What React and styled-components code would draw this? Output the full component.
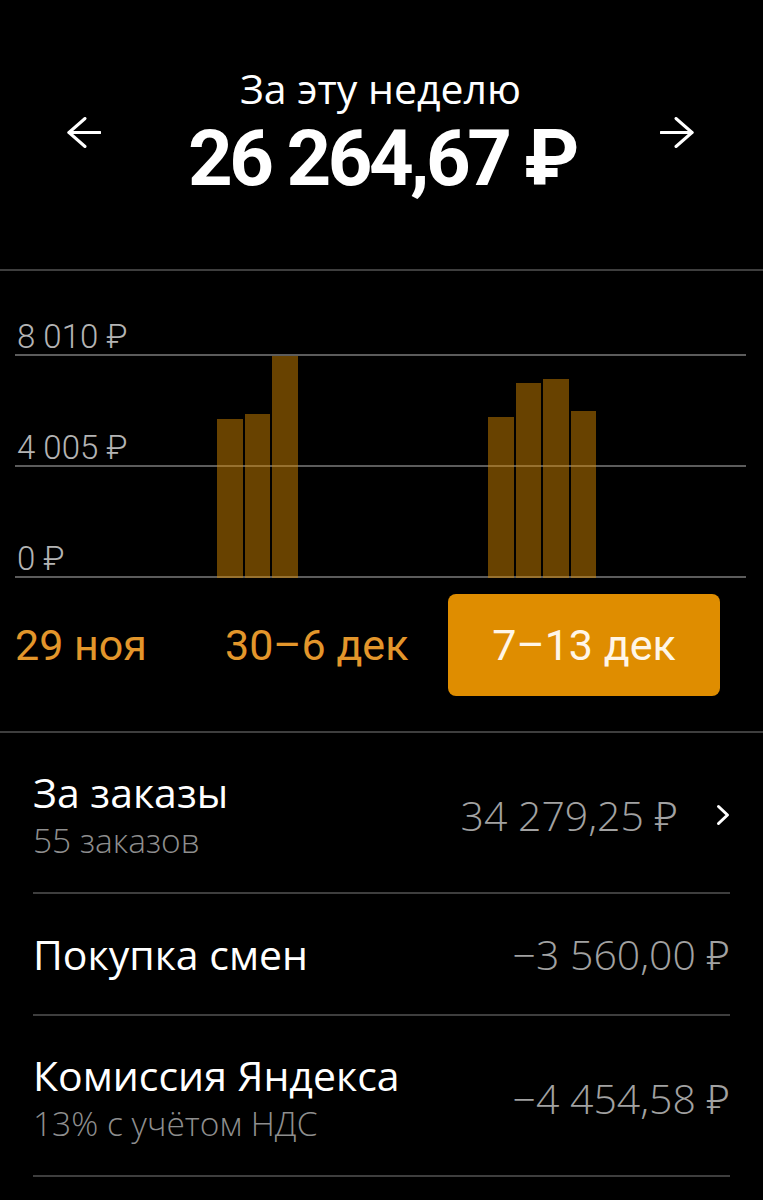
import React from "react";
import styled, { createGlobalStyle } from "styled-components";

const GlobalStyle = createGlobalStyle`
  html, body {
    margin: 0;
    padding: 0;
    background: #000;
  }
  * { box-sizing: border-box; }
`;

const Page = styled.div`
  width: 763px;
  min-height: 1200px;
  background: #000;
  color: #fff;
  font-family: "Open Sans", "Noto Sans", sans-serif;
  overflow: hidden;
`;

const Header = styled.header`
  display: flex;
  justify-content: space-between;
  align-items: flex-start;
  padding: 66px 69px 71px 67px;
  border-bottom: 2px solid #3e3e3e;
`;

const ArrowButton = styled.button`
  all: unset;
  display: flex;
  width: 34px;
  height: 32px;
  margin-top: 51px;
  color: #fff;
  cursor: pointer;
`;

const Summary = styled.div`
  display: flex;
  flex-direction: column;
  align-items: center;
`;

const Period = styled.div`
  font-size: 41px;
  line-height: 44px;
  font-weight: 400;
  color: #fff;
`;

const Total = styled.div`
  margin-top: 10px;
  padding-left: 3px;
  font-family: Roboto, "Noto Sans", sans-serif;
  font-size: 78px;
  line-height: 78px;
  font-weight: 700;
  letter-spacing: -3.5px;
  color: #fff;
`;

const ChartSection = styled.section`
  padding: 50px 17px 0 15px;
`;

const Chart = styled.div`
  display: grid;
  & > * {
    grid-area: 1 / 1;
  }
`;

const Grid = styled.div`
  display: flex;
  flex-direction: column;
`;

const GridRow = styled.div`
  display: flex;
  align-items: flex-end;
  height: ${(p) => p.$h}px;
  border-bottom: 2px solid #5c5c5c;
`;

const AxisLabel = styled.span`
  font-family: Roboto, "Noto Sans", sans-serif;
  font-size: 33px;
  line-height: 32px;
  font-weight: 300;
  padding-left: 2px;
  padding-bottom: 1px;
  color: #b4b4b4;
`;

const BarsLayer = styled.div`
  align-self: end;
  height: 222px;
  display: flex;
  align-items: flex-end;
  gap: 81px;
  padding-left: 202px;
`;

const Week = styled.div`
  display: flex;
  align-items: flex-end;
  gap: 2px;
  width: 190px;
  height: 100%;
`;

const Bar = styled.div`
  width: 25.5px;
  flex: none;
  background: rgba(222, 140, 0, 0.47);
`;

const PeriodRow = styled.div`
  display: grid;
  grid-template-columns: 210px 223px 272px;
  align-items: center;
  padding: 16px 0 35px 15px;
  border-bottom: 2px solid #3e3e3e;
`;

const PeriodLabel = styled.span`
  font-family: Roboto, "Noto Sans", sans-serif;
  font-size: 43px;
  line-height: 50px;
  color: #e3962b;
`;

const PeriodButton = styled.button`
  all: unset;
  display: flex;
  align-items: center;
  justify-content: center;
  height: 102px;
  border-radius: 8px;
  background: #df8d00;
  font-family: Roboto, "Noto Sans", sans-serif;
  font-size: 43px;
  line-height: 50px;
  color: #fff6e8;
  cursor: pointer;
`;

const List = styled.div`
  display: flex;
  flex-direction: column;
`;

const Row = styled.div`
  display: flex;
  align-items: center;
  justify-content: space-between;
  margin: 0 33px;
  padding: ${(p) => (p.$single ? "36px 0 36px" : "37px 0 32px")};
  border-bottom: 2px solid #3e3e3e;
`;

const RowText = styled.div`
  display: flex;
  flex-direction: column;
`;

const RowTitle = styled.div`
  font-size: 41px;
  line-height: 44px;
  color: #fff;
`;

const RowSub = styled.div`
  margin-top: 6px;
  font-size: 33.5px;
  line-height: 40px;
  font-weight: 300;
  color: #8e8e8e;
`;

const RowValue = styled.div`
  display: flex;
  align-items: center;
  gap: 38px;
  font-size: 41px;
  line-height: 48px;
  font-weight: 300;
  color: #a2a2a2;
`;

const Chevron = styled.svg`
  width: 14px;
  height: 22px;
  flex: none;
`;

const ArrowIcon = ({ dir }) => (
  <svg width="34" height="32" viewBox="0 0 34 32" fill="none" stroke="currentColor" strokeWidth="3" strokeLinecap="round" strokeLinejoin="round">
    {dir === "left" ? (
      <>
        <path d="M2 15.5H33" />
        <path d="M18 1.5L2 15.5L18 29.5" />
      </>
    ) : (
      <>
        <path d="M1 15.5H32" />
        <path d="M16 1.5L32 15.5L16 29.5" />
      </>
    )}
  </svg>
);

const MAX = 8010;
const weeks = [
  [5737, 5918, 8010],
  [5810, 7036, 7180, 6020],
];

const rows = [
  { title: "За заказы", sub: "55 заказов", value: "34 279,25 ₽", link: true },
  { title: "Покупка смен", value: "−3 560,00 ₽" },
  { title: "Комиссия Яндекса", sub: "13% с учётом НДС", value: "−4 454,58 ₽" },
];

export default function App() {
  return (
    <Page>
      <GlobalStyle />
      <Header>
        <ArrowButton aria-label="Предыдущая неделя">
          <ArrowIcon dir="left" />
        </ArrowButton>
        <Summary>
          <Period>За эту неделю</Period>
          <Total>26 264,67 ₽</Total>
        </Summary>
        <ArrowButton aria-label="Следующая неделя">
          <ArrowIcon dir="right" />
        </ArrowButton>
      </Header>

      <ChartSection>
        <Chart>
          <Grid>
            <GridRow $h={35}>
              <AxisLabel>8 010 ₽</AxisLabel>
            </GridRow>
            <GridRow $h={111}>
              <AxisLabel>4 005 ₽</AxisLabel>
            </GridRow>
            <GridRow $h={111}>
              <AxisLabel>0 ₽</AxisLabel>
            </GridRow>
          </Grid>
          <BarsLayer>
            {weeks.map((w, i) => (
              <Week key={i}>
                {w.map((v, j) => (
                  <Bar key={j} style={{ height: `${(v / MAX) * 222}px` }} />
                ))}
              </Week>
            ))}
          </BarsLayer>
        </Chart>
      </ChartSection>

      <PeriodRow>
        <PeriodLabel>29 ноя</PeriodLabel>
        <PeriodLabel>30–6 дек</PeriodLabel>
        <PeriodButton>7–13 дек</PeriodButton>
      </PeriodRow>

      <List>
        {rows.map((r) => (
          <Row key={r.title} $single={!r.sub}>
            <RowText>
              <RowTitle>{r.title}</RowTitle>
              {r.sub && <RowSub>{r.sub}</RowSub>}
            </RowText>
            <RowValue>
              {r.value}
              {r.link && (
                <Chevron viewBox="0 0 14 22" fill="none" stroke="#fff" strokeWidth="3" strokeLinecap="round" strokeLinejoin="round">
                  <path d="M2.5 2.5L11.5 11L2.5 19.5" />
                </Chevron>
              )}
            </RowValue>
          </Row>
        ))}
      </List>
    </Page>
  );
}
